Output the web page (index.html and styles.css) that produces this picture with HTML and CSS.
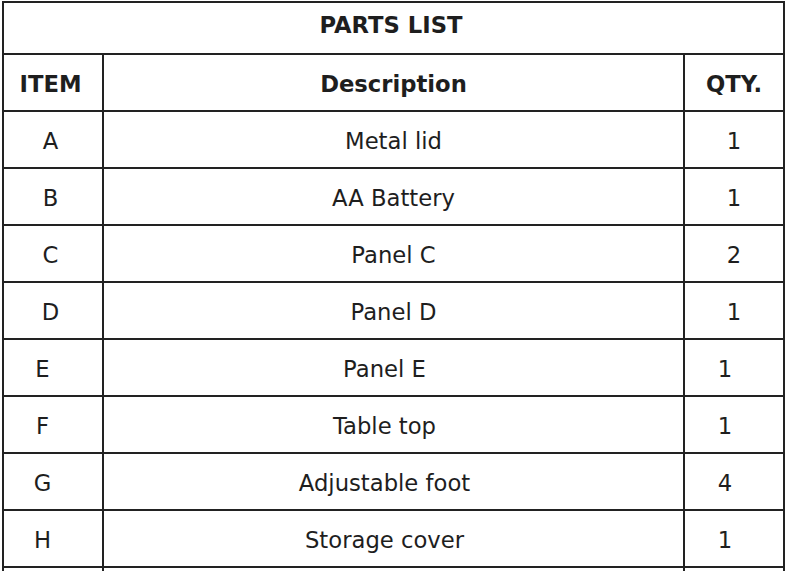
FILE: index.html
```html
<!DOCTYPE html>
<html>
<head>
<meta charset="utf-8">
<link rel="stylesheet" href="styles.css">
</head>
<body>
<table class="parts">
  <colgroup>
    <col class="c-item">
    <col class="c-desc">
    <col class="c-qty">
  </colgroup>
  <tr class="title-row"><th colspan="3">PARTS LIST</th></tr>
  <tr class="head-row"><th>ITEM</th><th>Description</th><th>QTY.</th></tr>
  <tr><td>A</td><td>Metal lid</td><td>1</td></tr>
  <tr><td>B</td><td>AA Battery</td><td>1</td></tr>
  <tr><td>C</td><td>Panel C</td><td>2</td></tr>
  <tr><td>D</td><td>Panel D</td><td>1</td></tr>
  <tr class="shift"><td>E</td><td>Panel E</td><td>1</td></tr>
  <tr class="shift"><td>F</td><td>Table top</td><td>1</td></tr>
  <tr class="shift"><td>G</td><td>Adjustable foot</td><td>4</td></tr>
  <tr class="shift"><td>H</td><td>Storage cover</td><td>1</td></tr>
  <tr class="shift"><td>&nbsp;</td><td>&nbsp;</td><td>&nbsp;</td></tr>
</table>
</body>
</html>
```
FILE: styles.css
```css
html, body {
  margin: 0;
  padding: 0;
  background: #ffffff;
}
html {
  height: 571px;
  overflow: hidden;
}
body {
  padding: 1px 0 0 2px;
  font-family: "DejaVu Sans", Verdana, sans-serif;
  color: #1e1e1e;
  font-size: 22.7px;
}
.parts {
  border-collapse: separate;
  border-spacing: 0;
  border-left: 2px solid #222222;
  border-top: 2px solid #222222;
  table-layout: fixed;
  width: 783px;
}
.c-item { width: 100px; }
.c-desc { width: 581px; }
.c-qty { width: 100px; }
.parts th,
.parts td {
  box-sizing: border-box;
  border-right: 2px solid #222222;
  border-bottom: 2px solid #222222;
  padding: 0;
  text-align: center;
  vertical-align: middle;
  height: 57px;
  font-weight: normal;
  line-height: 1;
}
.parts th {
  font-weight: bold;
}
.parts tr > :first-child {
  padding-right: 5px;
}
.title-row th {
  height: 52px;
  padding-bottom: 5px;
  padding-right: 0;
}
.head-row th {
  padding-top: 4px;
}
.parts td {
  padding-top: 4px;
}
.shift td {
  padding-right: 18px;
}
.parts .shift td:first-child {
  padding-right: 21px;
}
```
